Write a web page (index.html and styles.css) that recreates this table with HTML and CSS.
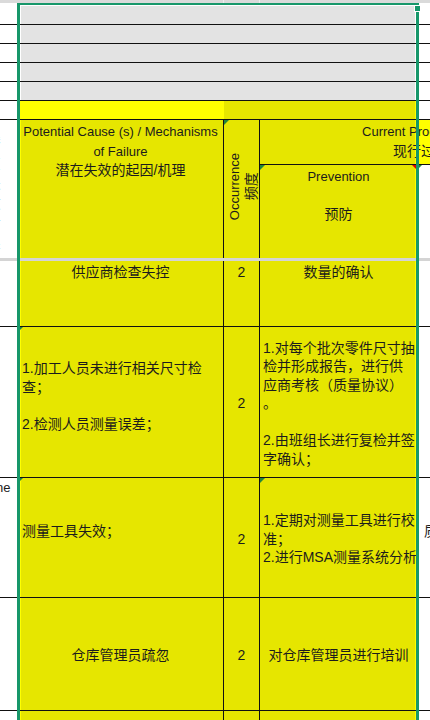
FILE: index.html
```html
<!DOCTYPE html>
<html lang="zh">
<head>
<meta charset="utf-8">
<title>PFMEA</title>
<link rel="stylesheet" href="styles.css">
</head>
<body>
<div class="sheet">
  <div class="strip"><div></div><div class="sep"></div><div class="sep"></div><div></div><div></div></div>

  <div class="row h22">
    <div class="c"></div><div class="c gray first"></div><div class="c"></div>
  </div>
  <div class="row h19">
    <div class="c"></div><div class="c gray"></div><div class="c"></div>
  </div>
  <div class="row h19">
    <div class="c"></div><div class="c gray"></div><div class="c"></div>
  </div>
  <div class="row h19">
    <div class="c"></div><div class="c gray"></div><div class="c"></div>
  </div>
  <div class="row h19">
    <div class="c"></div><div class="c gray"></div><div class="c"></div>
  </div>
  <div class="row h19">
    <div class="c"></div><div class="c active"></div><div class="c shade2"></div><div class="c"></div>
  </div>

  <div class="row header">
    <div class="c hs"><div class="vtext">潜在失效后果</div></div>
    <div class="c y vr ledge hcause"><span class="lat">Potential Cause (s) / Mechanisms<br>of Failure</span><br>潜在失效的起因/机理</div>
    <div class="c y vr hocc"><span class="tri"></span><div class="rot"><span class="lat">Occurrence</span><br>频度</div></div>
    <div class="c hcur"><div class="cur-in"><span class="lat">Current Process Controls</span><br>现行过程控制</div></div>
    <div class="c y redge hprev"><span class="tri"></span><span class="tri-r"></span><span class="lat">Prevention</span><br><br>预防</div>
    <div class="c hdet"><span class="tri"></span></div>
  </div>

  <div class="divider"></div>

  <div class="row r1">
    <div class="c"></div>
    <div class="c y vr ledge top">供应商检查失控</div>
    <div class="c y vr top">2</div>
    <div class="c y redge top">数量的确认</div>
    <div class="c"></div>
  </div>

  <div class="row r2">
    <div class="c"></div>
    <div class="c y vr ledge mid lft pb"><span class="tri"></span><p>1.加工人员未进行相关尺寸检<br>查；<br><br>2.检测人员测量误差；</p></div>
    <div class="c y vr mid"><p>2</p></div>
    <div class="c y redge mid lft2 nw"><p>1.对每个批次零件尺寸抽<br>检并形成报告，进行供<br>应商考核（质量协议）<br>。<br><br>2.由班组长进行复检并签<br>字确认；</p></div>
    <div class="c"></div>
  </div>

  <div class="row r3">
    <div class="c"><p class="lat ne">ne</p></div>
    <div class="c y vr ledge mid lft pb"><span class="tri"></span><p>测量工具失效；</p></div>
    <div class="c y vr mid"><p>2</p></div>
    <div class="c y redge mid lft2 nw"><span class="tri"></span><p>1.定期对测量工具进行校<br>准；<br>2.进行MSA测量系统分析</p></div>
    <div class="c mid lft3 pb nw"><p>质</p></div>
  </div>

  <div class="row r4">
    <div class="c"></div>
    <div class="c y vr ledge mid"><p>仓库管理员疏忽</p></div>
    <div class="c y vr mid"><p>2</p></div>
    <div class="c y redge mid"><p>对仓库管理员进行培训</p></div>
    <div class="c"></div>
  </div>

  <div class="row r5">
    <div class="c"></div>
    <div class="c y vr ledge"></div>
    <div class="c y vr"></div>
    <div class="c y redge"></div>
    <div class="c"></div>
  </div>
</div>

<div class="selection"><div class="handle"></div></div>
</body>
</html>
```

FILE: styles.css
```css
* {
  box-sizing: border-box;
  margin: 0;
  padding: 0;
}

html, body {
  width: 430px;
  height: 720px;
  overflow: hidden;
  background: #ffffff;
}

body {
  position: relative;
  font-family: "Liberation Sans", "Noto Sans CJK SC", sans-serif;
  font-size: 14px;
  line-height: 18.5px;
  color: #1c1c1c;
}

.lat {
  font-size: 13px;
}

.strip {
  height: 3px;
  background: #dadada;
  display: grid;
  grid-template-columns: 18px 206px 36px 157px 13px;
}

.strip .sep {
  border-right: 1px solid #ededed;
}

.row {
  display: grid;
  grid-template-columns: 18px 206px 36px 157px 13px;
}

.h22 { height: 22px; }
.h19 { height: 19px; }
.header { height: 138px; grid-template-rows: 45px 93px; }
.r1 { height: 66px; }
.r2 { height: 151px; }
.r3 { height: 120px; }
.r4 { height: 113px; }
.r5 { height: 40px; }

.c {
  position: relative;
  overflow: hidden;
  border-bottom: 1px solid #111;
}

.vr {
  border-right: 1px solid #111;
}

.y {
  background: #e6e600;
}

.gray {
  grid-column: span 3;
  background: #e3e3e3;
  box-shadow: inset 3px 0 0 #ffffff, inset -2px 0 0 #ffffff;
}

.gray.first {
  box-shadow: inset 3px 0 0 #ffffff, inset -2px 0 0 #ffffff, inset 0 3px 0 #ffffff;
}

.active {
  background: #ffff00;
}

.shade2 {
  grid-column: span 2;
  background: #e6e600;
  box-shadow: inset -2px 0 0 #ffff00;
}

.ledge {
  box-shadow: inset 3px 0 0 #ffff00;
}

.redge {
  box-shadow: inset -2px 0 0 #ffff00;
}

/* header */
.hs {
  grid-column: 1;
  grid-row: 1 / 3;
  border-bottom: none;
}

.vtext {
  writing-mode: vertical-rl;
  margin-left: -17px;
  padding-top: 16px;
  letter-spacing: 6px;
  color: #333;
}

.hcause {
  grid-column: 2;
  grid-row: 1 / 3;
  border-bottom: none;
  text-align: center;
  padding-top: 2px;
  white-space: nowrap;
}

.hocc {
  grid-column: 3;
  grid-row: 1 / 3;
  border-bottom: none;
  display: flex;
  align-items: center;
  justify-content: center;
  padding-left: 1px;
  padding-bottom: 4px;
}

.rot {
  writing-mode: vertical-rl;
  text-orientation: sideways;
  transform: rotate(180deg);
  line-height: 16px;
  text-align: center;
  white-space: nowrap;
}

.hcur {
  grid-column: 4 / 6;
  grid-row: 1;
  background: linear-gradient(to right, #e6e600 155px, #ffff00 155px);
  padding-top: 2px;
}

.cur-in {
  width: 300px;
  margin-left: 25px;
  text-align: center;
  white-space: nowrap;
}

.hprev {
  grid-column: 4;
  grid-row: 2;
  border-bottom: none;
  text-align: center;
  padding-top: 2px;
}

.hdet {
  grid-column: 5;
  grid-row: 2;
  border-bottom: none;
}

.divider {
  height: 3px;
  background: #d4d4d4;
}

/* body cells */
.top {
  text-align: center;
  padding-top: 2px;
}

.mid {
  display: flex;
  align-items: center;
  justify-content: center;
  text-align: center;
  padding-top: 3px;
}

.lft {
  justify-content: flex-start;
  text-align: left;
  padding-left: 4px;
}

.lft2 {
  justify-content: flex-start;
  text-align: left;
  padding-left: 3px;
}

.lft3 {
  justify-content: flex-start;
  text-align: left;
  padding-left: 7px;
}

.pb {
  padding-bottom: 15px;
}

.nw {
  white-space: nowrap;
}

.ne {
  margin-left: -4px;
  padding-top: 1px;
  white-space: nowrap;
}

/* indicators */
.tri {
  position: absolute;
  left: 0;
  top: 0;
  width: 0;
  height: 0;
  border-top: 5px solid #23873a;
  border-right: 5px solid transparent;
}

.tri-r {
  position: absolute;
  right: 0;
  top: 0;
  width: 0;
  height: 0;
  border-top: 5px solid #e00000;
  border-left: 5px solid transparent;
}

/* selection */
.selection {
  position: absolute;
  left: 17px;
  top: 3px;
  width: 402px;
  height: 740px;
  border: 3px solid #17976a;
  border-top-width: 2px;
  border-bottom: none;
  pointer-events: none;
}

.handle {
  position: absolute;
  left: 394px;
  top: 0;
  width: 7px;
  height: 7px;
  background: #17976a;
  border: 1px solid #ffffff;
}
```
